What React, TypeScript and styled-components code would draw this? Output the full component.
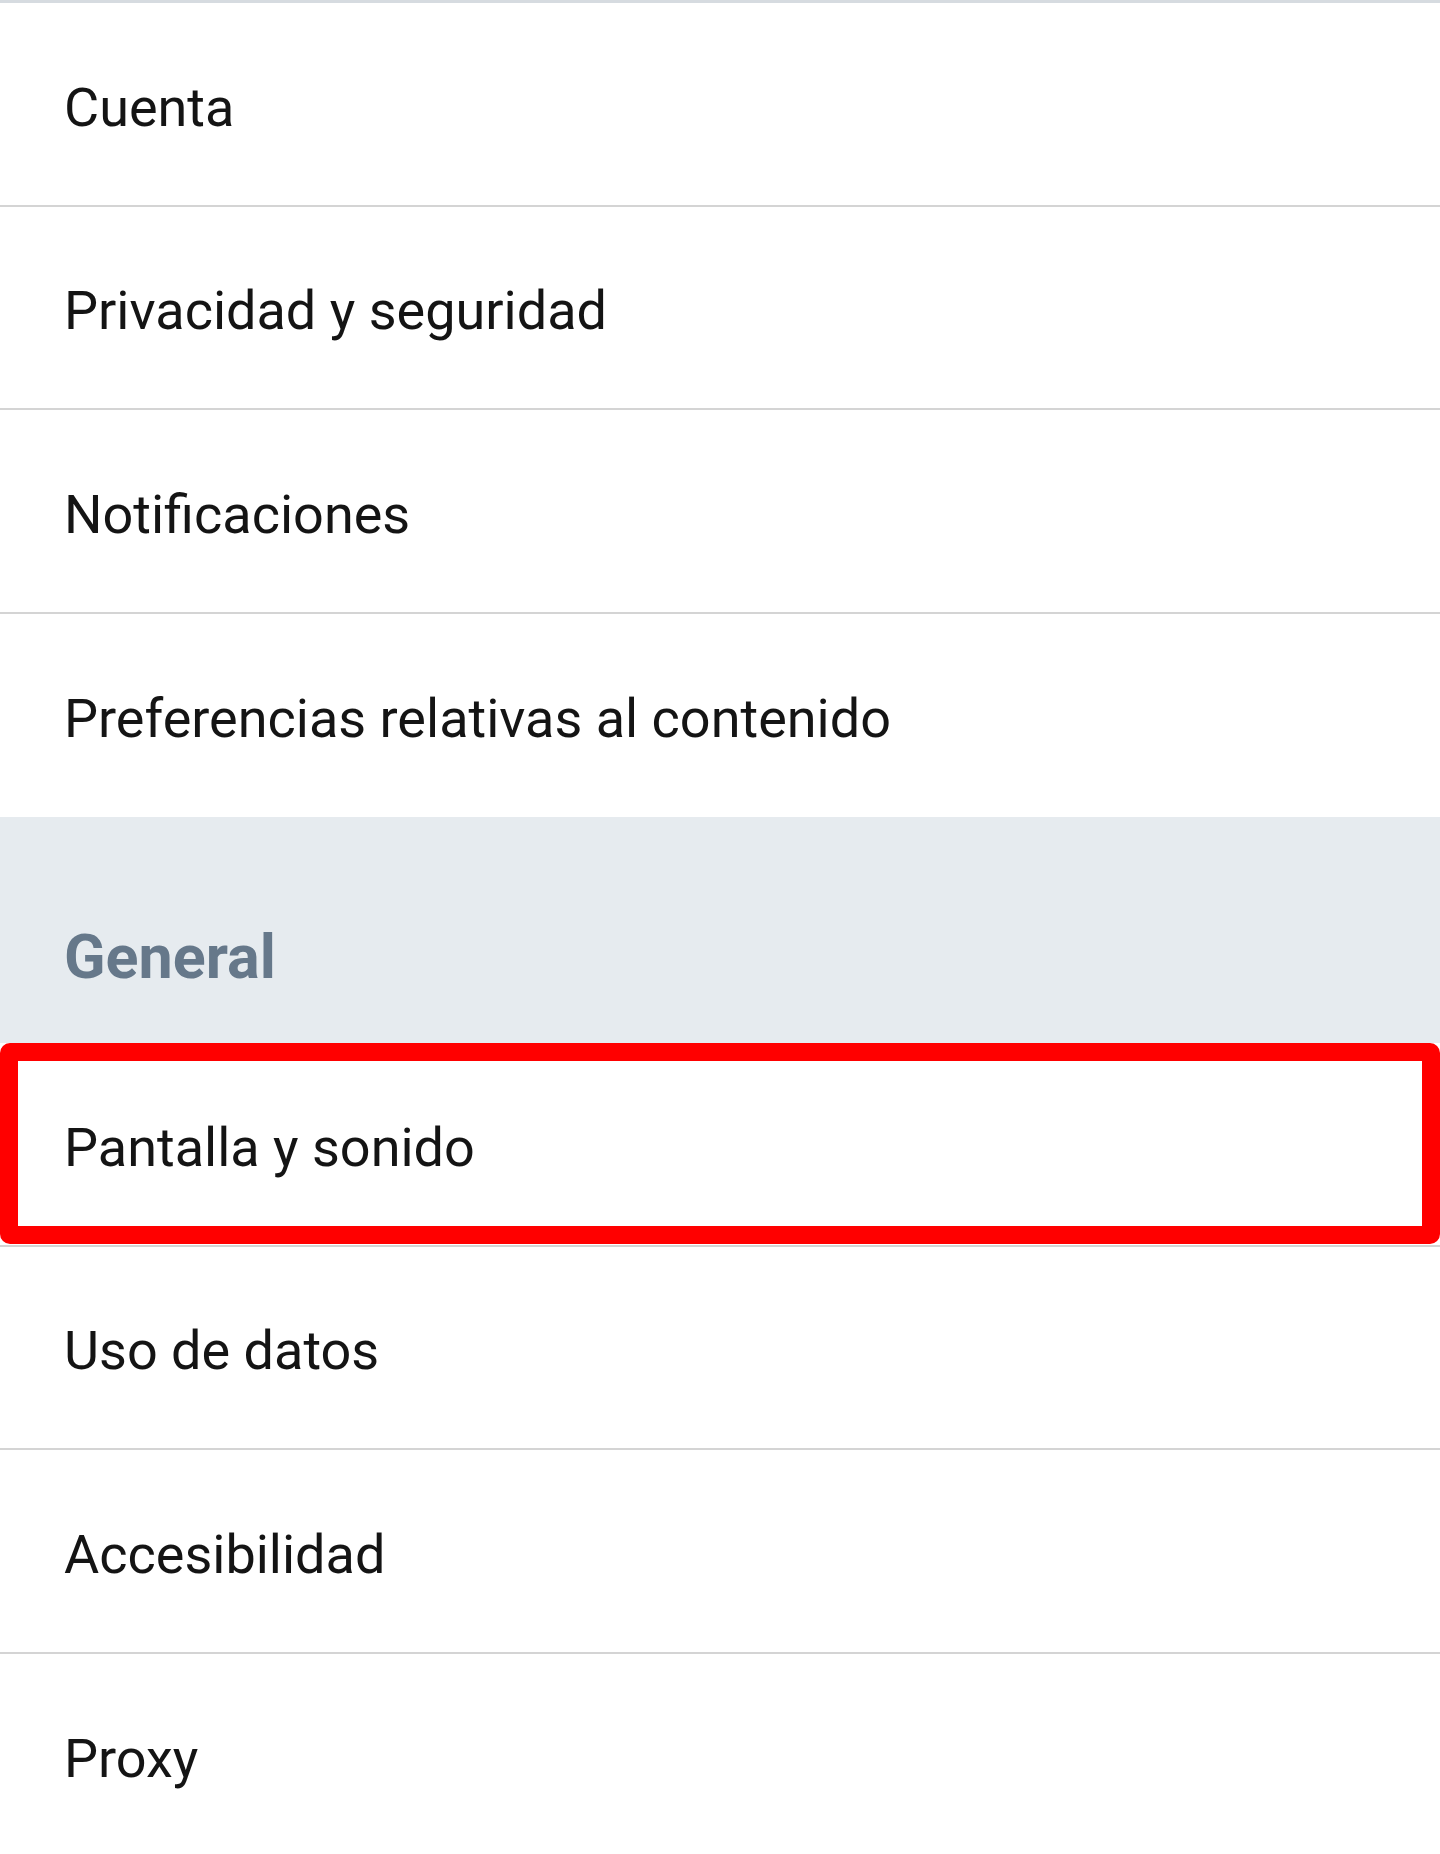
import React from "react";
import styled, { createGlobalStyle } from "styled-components";

const Global = createGlobalStyle`
  html, body { margin: 0; padding: 0; background: #ffffff; }
  body { font-family: Roboto, "Noto Sans", "Liberation Sans", sans-serif; -webkit-font-smoothing: antialiased; }
`;

const Page = styled.div`
  width: 1440px;
  min-height: 1854px;
  background: #ffffff;
  border-top: 3px solid #d6dbe0;
  box-sizing: border-box;
  display: flex;
  flex-direction: column;
  overflow: hidden;
`;

const Row = styled.div<{ $noDivider?: boolean }>`
  position: relative;
  height: 203.5px;
  flex-shrink: 0;
  box-sizing: border-box;
  display: flex;
  align-items: center;
  padding-left: 64px;
  padding-top: 7px;
  border-bottom: ${(p) => (p.$noDivider ? "none" : "2px solid #d4d4d4")};
  font-size: 54px;
  color: #141414;
  font-weight: 400;
`;

const SectionHeader = styled.div`
  height: 226px;
  flex-shrink: 0;
  background: #e6ebef;
  display: flex;
  align-items: center;
  padding-left: 64px;
  padding-top: 54px;
  box-sizing: border-box;
  font-size: 61px;
  font-weight: 700;
  color: #66788a;
`;

const Highlight = styled.div`
  position: absolute;
  left: 0;
  right: 0;
  top: 0;
  bottom: 1px;
  border: 18px solid #ff0000;
  border-radius: 10px;
  pointer-events: none;
`;

const topItems = [
  "Cuenta",
  "Privacidad y seguridad",
  "Notificaciones",
  "Preferencias relativas al contenido",
];

const bottomItems = ["Uso de datos", "Accesibilidad", "Proxy"];

export default function App() {
  return (
    <>
      <Global />
      <Page>
        {topItems.map((t, i) => (
          <Row key={t} $noDivider={i === topItems.length - 1}>
            {t}
          </Row>
        ))}
        <SectionHeader>General</SectionHeader>
        <Row>
          Pantalla y sonido
          <Highlight />
        </Row>
        {bottomItems.map((t, i) => (
          <Row key={t} $noDivider={i === bottomItems.length - 1}>
            {t}
          </Row>
        ))}
      </Page>
    </>
  );
}
